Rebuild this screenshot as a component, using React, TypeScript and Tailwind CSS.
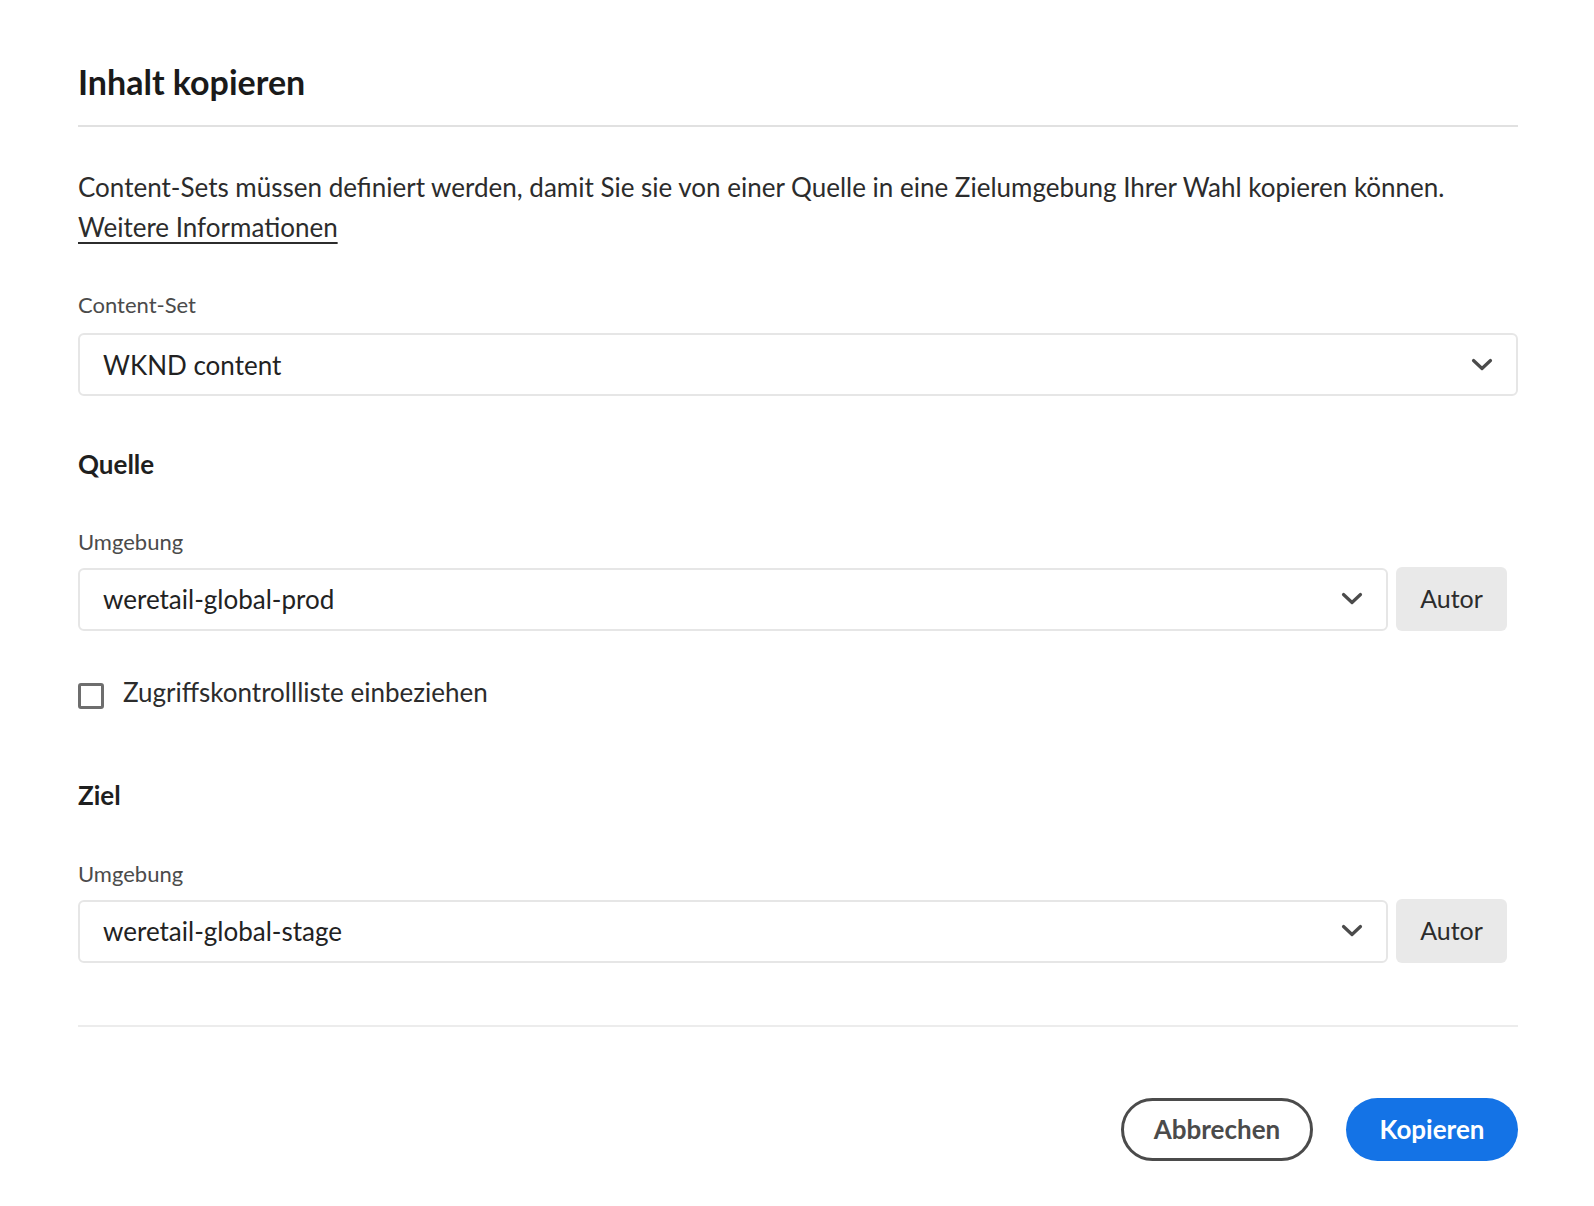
import { useState } from "react";

const Chevron = () => (
  <svg width="22" height="14" viewBox="0 0 22 14" fill="none">
    <polyline
      points="2.5,2.5 11,10.5 19.5,2.5"
      stroke="#4b4b4b"
      strokeWidth="3.2"
      strokeLinecap="round"
      strokeLinejoin="round"
    />
  </svg>
);

const Select = ({ value, className = "" }: { value: string; className?: string }) => (
  <div
    className={`flex h-[63px] items-center justify-between rounded-[6px] border-2 border-[#e6e6e6] bg-white pl-[23px] pr-[23px] ${className}`}
  >
    <span className="text-[26px] leading-[32px] text-[#222]">{value}</span>
    <Chevron />
  </div>
);

const EnvRow = ({ value }: { value: string }) => (
  <div className="flex items-center gap-[8px] pr-[11px]">
    <Select value={value} className="flex-1" />
    <button className="h-[64px] w-[111px] rounded-[6px] bg-[#e9e9e9] text-[25px] text-[#2c2c2c]">
      Autor
    </button>
  </div>
);

export default function App() {
  const [acl, setAcl] = useState(false);

  return (
    <div
      className="min-h-screen bg-white"
      style={{ fontFamily: "Lato, 'Open Sans', sans-serif" }}
    >
      <div className="ml-[78px] w-[1440px] pt-[62px]">
        <h1 className="text-[34px] font-bold leading-[40px] text-[#1a1a1a]">
          Inhalt kopieren
        </h1>
        <div className="mt-[23px] h-[2px] bg-[#e1e1e1]" />

        <p className="mt-[40px] text-[26px] leading-[40px] text-[#2c2c2c]">
          Content-Sets müssen definiert werden, damit Sie sie von einer Quelle in eine
          Zielumgebung Ihrer Wahl kopieren können.
          <br />
          <a href="#" className="underline decoration-[2px] underline-offset-[5px]">
            Weitere Informationen
          </a>
        </p>

        <div className="mt-[44px] text-[22px] leading-[28px] text-[#4b4b4b]">Content-Set</div>
        <Select value="WKND content" className="mt-[14px] h-[62px]" />

        <h2 className="mt-[54px] text-[26px] font-bold leading-[28px] text-[#1f1f1f]">Quelle</h2>
        <div className="mt-[50px] text-[22px] leading-[28px] text-[#4b4b4b]">Umgebung</div>
        <div className="mt-[11px]">
          <EnvRow value="weretail-global-prod" />
        </div>

        <label className="mt-[45px] flex cursor-pointer items-start gap-[19px]">
          <span
            onClick={() => setAcl(!acl)}
            className="mt-[7px] h-[26px] w-[26px] shrink-0 rounded-[3px] border-[3px] border-[#6e6e6e] bg-white"
          />
          <span className="text-[26px] leading-[32px] text-[#2c2c2c]">
            Zugriffskontrollliste einbeziehen
          </span>
        </label>

        <h2 className="mt-[72px] text-[26px] font-bold leading-[28px] text-[#1f1f1f]">Ziel</h2>
        <div className="mt-[51px] text-[22px] leading-[28px] text-[#4b4b4b]">Umgebung</div>
        <div className="mt-[11px]">
          <EnvRow value="weretail-global-stage" />
        </div>

        <div className="mt-[62px] h-[2px] bg-[#ececec]" />

        <div className="mt-[71px] flex justify-end gap-[33px]">
          <button className="h-[63px] w-[192px] rounded-full border-[3px] border-[#4b4b4b] text-[26px] font-bold text-[#4b4b4b]">
            Abbrechen
          </button>
          <button className="h-[63px] w-[172px] rounded-full bg-[#1473e6] text-[26px] font-bold text-white">
            Kopieren
          </button>
        </div>
      </div>
    </div>
  );
}
